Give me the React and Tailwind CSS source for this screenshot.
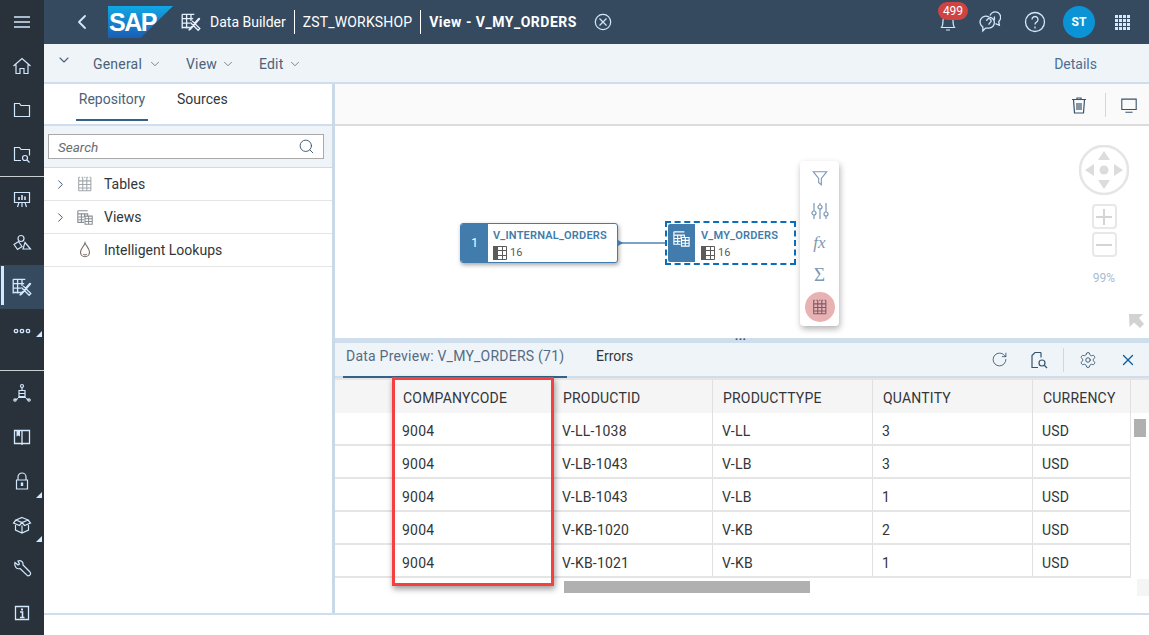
import React from "react";
import { ChevronDown, ChevronLeft, ChevronRight, Search, RotateCw, Settings, X } from "lucide-react";

const columns = ["COMPANYCODE", "PRODUCTID", "PRODUCTTYPE", "QUANTITY", "CURRENCY"];
const rows = [
  ["9004", "V-LL-1038", "V-LL", "3", "USD"],
  ["9004", "V-LB-1043", "V-LB", "3", "USD"],
  ["9004", "V-LB-1043", "V-LB", "1", "USD"],
  ["9004", "V-KB-1020", "V-KB", "2", "USD"],
  ["9004", "V-KB-1021", "V-KB", "1", "USD"],
];

/* ---- small drawn icons, all on a 20 box ---- */
function Ico({ size = 20, className = "", sw = 1.2, children }) {
  return (
    <svg width={size} height={size} viewBox="0 0 20 20" fill="none" stroke="currentColor" strokeWidth={sw} className={className}>
      {children}
    </svg>
  );
}

const TableGlyph = (props) => (
  <Ico {...props}>
    <path d="M3 2.500v15M7.500 2.500v15M12 2.500v15M16.500 2.500v15M3 6.500h13.500M3 10.500h13.500M3 14.500h13.500M3 17.500h13.500" />
    <path d="M3 2.500h13.500" strokeDasharray="1.500 1.500" />
  </Ico>
);
const ViewGlyph = (props) => (
  <Ico {...props}>
    <path d="M2 3h11M2 6.500h11v3M2 3v13h7M2 10h7M2 13h7M6 6.500V16M9.500 6.500V10" />
    <path d="M10 9h8v9h-8zM10 12h8M10 15h8M14 9v9" />
  </Ico>
);
const BuilderGlyph = (props) => (
  <Ico {...props}>
    <path d="M2 3h11M2 7h10M2 11h7M2 15h7M2 3v13M6 3v13M10 3v6" />
    <path d="M11 9l7 7-1.500 1.500-7-7M17.500 7.500l-8 9-1.500 1 1-1.700 8-9c.8-.4 1 .2.5.7z" />
  </Ico>
);
const MiniGrid = () => (
  <svg width="14" height="14" viewBox="0 0 14 14">
    <rect width="14" height="14" fill="#fff" />
    <rect width="5" height="14" fill="#5b5b5b" />
    <path d="M5 .5h8.500v13H5M.5 4.500h13M.5 9.500h13M9.500 0v14" stroke="#5b5b5b" fill="none" />
  </svg>
);

function NavItem({ children, active, corner, tall }) {
  return (
    <div className={`relative flex w-full items-center justify-center text-[#d1e8ff] ${tall ? "h-[61px] pb-[17px]" : "h-[44px]"} ${active ? "bg-[#354a5f]" : ""}`}>
      {active && <span className="absolute left-[1px] top-[1px] bottom-[4px] w-[3px] bg-[#d1e8ff]" />}
      {children}
      {corner && (
        <span className={`absolute right-[2px] h-0 w-0 border-b-[6px] border-l-[6px] border-b-[#d1e8ff] border-l-transparent ${tall ? "top-[22px]" : "bottom-[5px]"}`} />
      )}
    </div>
  );
}

function Sidebar() {
  return (
    <aside className="flex h-[635px] w-[44px] shrink-0 flex-col bg-[#29313a]">
      <NavItem>
        <svg width="16" height="14" viewBox="0 0 16 14" stroke="currentColor" strokeWidth="1.600"><path d="M0 2h16M0 7h16M0 12h16" /></svg>
      </NavItem>
      <NavItem>
        <Ico><path d="M1.500 10L10 2.500 18.500 10M4 8.500V17.500h4v-5h4v5h4V8.500" /></Ico>
      </NavItem>
      <NavItem>
        <Ico><path d="M2.500 16.500V3.500h5l1.500 2h8.500v11z" /></Ico>
      </NavItem>
      <NavItem>
        <Ico><path d="M9 16.500H2.500V3.500h5l1.500 2h8.500v6" /><circle cx="13" cy="14" r="2.500" /><path d="M15 16l2.500 2.500" /></Ico>
      </NavItem>
      <div className="h-[1px] w-full bg-[#c9ced3]" />
      <NavItem>
        <Ico><path d="M2.500 3.500h15v10h-15zM7 13.500L5.500 18M13 13.500l1.500 4.500M10 13.500V18" /><path d="M7 11V8M10 11V6M13 11V7.500" strokeWidth="1.600" /></Ico>
      </NavItem>
      <NavItem>
        <Ico><circle cx="9" cy="5.500" r="3" /><path d="M2 11.500l4.500-3 3.500 5-4.500 3zM13 9.500l5.500 6.500H11z" /></Ico>
      </NavItem>
      <NavItem active>
        <BuilderGlyph size={22} />
      </NavItem>
      <NavItem tall corner>
        <svg width="18" height="6" viewBox="0 0 18 6" fill="none" stroke="currentColor" strokeWidth="1.300"><circle cx="3" cy="3" r="1.700" /><circle cx="9" cy="3" r="1.700" /><circle cx="15" cy="3" r="1.700" /></svg>
      </NavItem>
      <div className="h-[1px] w-full bg-[#c9ced3]" />
      <NavItem>
        <Ico><circle cx="10" cy="3" r="1.500" /><path d="M10 4.500V7M6.500 7.500h7M7 7.500v6h6v-6M7 10.500h6M6 14.500h8M6 15.500l-3 1.500M14 15.500l3 1.500" /><circle cx="3" cy="17" r="1.200" /><circle cx="17" cy="17" r="1.200" /></Ico>
      </NavItem>
      <NavItem>
        <Ico sw={1.300}><path d="M2.500 3.500h15v13h-15zM10 3.500V18" /><path d="M4.500 3.500h3.500v6l-1.750-1-1.750 1z" fill="currentColor" stroke="none" /></Ico>
      </NavItem>
      <NavItem corner>
        <Ico><path d="M6 9V6a4 4 0 018 0v3M4.500 9h11v9h-11z" /><path d="M10 11.500v3.500" strokeWidth="2.400" /></Ico>
      </NavItem>
      <NavItem corner>
        <Ico><path d="M10 2.500l6 2.500-6 2.500L4 5zM4 5L1.500 8 7.500 10.500 10 7.500 12.500 10.500l6-2.500L16 5M3.500 10v5L10 18l6.500-3v-5M10 10.500V18" /></Ico>
      </NavItem>
      <NavItem>
        <Ico><path d="M3 3.500l3 2.500 1.500-1L6 2c3-1 5.500 1 5 4L18 13c.8 1 .5 2.500-.3 3.200s-2 .8-2.800 0L8 9.500C5 10.500 2 8 3 3.500z" /></Ico>
      </NavItem>
      <NavItem>
        <Ico sw={1.300}><path d="M3.500 3.500h13v13h-13z" /><path d="M10 5.500v2" strokeWidth="2" /><path d="M8 9h2.500v5M8 14.500h4.500" strokeWidth="1.600" /></Ico>
      </NavItem>
    </aside>
  );
}

function SapLogo() {
  return (
    <div className="flex h-[32px] w-[65px] items-center bg-gradient-to-b from-[#10a8e4] to-[#1a5db5] pl-[1px] [clip-path:polygon(0_0,100%_0,50%_100%,0_100%)]">
      <span className="font-['Liberation_Sans'] text-[25px] font-bold leading-none tracking-[-1.500px] text-white">SAP</span>
    </div>
  );
}

function Header() {
  return (
    <header className="flex h-[44px] shrink-0 items-center bg-[#354a5f] text-[14px] text-white">
      <ChevronLeft size={24} strokeWidth={1.800} className="ml-[26px] text-[#d1e8ff]" />
      <div className="ml-[14px]"><SapLogo /></div>
      <BuilderGlyph size={22} className="ml-[7px] text-[#e6f2ff]" />
      <span className="ml-[8px]">Data Builder</span>
      <span className="mx-[8px] h-[24px] w-[1px] bg-white" />
      <span className="tracking-[0.15px]">ZST_WORKSHOP</span>
      <span className="mx-[8px] h-[24px] w-[1px] bg-white" />
      <span className="font-bold tracking-[0.5px]">View - V_MY_ORDERS</span>
      <svg width="18" height="18" viewBox="0 0 18 18" fill="none" stroke="#d1e8ff" strokeWidth="1.200" className="ml-[17px]">
        <circle cx="9" cy="9" r="7.700" /><path d="M5.500 5.500l7 7M12.500 5.500l-7 7" />
      </svg>
      <div className="relative ml-auto flex h-[44px] w-[22px] items-center justify-center text-[#d1e8ff]">
        <Ico><path d="M3.500 15.500c1.500-2 1.500-3.500 1.500-7a5 5 0 0110 0c0 3.500 0 5 1.500 7zM8 18h4" /></Ico>
        <span className="absolute left-[1px] top-[2px] flex h-[18px] w-[30px] items-center justify-center rounded-[9px] bg-[#d04343] text-[12px] text-white">499</span>
      </div>
      <Ico size={22} className="ml-[20px] text-[#d1e8ff]"><path d="M9 5.500a5 5 0 110 10H6l-2.500 2.500V14.500A5 5 0 019 5.500z" /><path d="M10 4a5 5 0 118 5.500L18.500 13l-3.500-1.500" /><path d="M7 9a2 2 0 113 1.700c-.8.500-1 1-1 1.800M14 5v3.500" /></Ico>
      <svg width="22" height="22" viewBox="0 0 22 22" fill="none" stroke="#d1e8ff" strokeWidth="1.300" className="ml-[23px]">
        <circle cx="11" cy="11" r="9.500" /><path d="M8 8.500a3 3 0 114.500 2.600c-1 .6-1.500 1.200-1.500 2.400M11 15.500v2" />
      </svg>
      <div className="ml-[17px] flex h-[32px] w-[32px] items-center justify-center rounded-full bg-[#0a94d6] text-[12px] font-bold">ST</div>
      <div className="ml-[20px] mr-[19px] grid grid-cols-4 gap-[1px]">
        {Array.from({ length: 16 }).map((_, i) => (
          <span key={i} className="h-[3px] w-[3px] bg-[#d1e8ff]" />
        ))}
      </div>
    </header>
  );
}

function MenuBar() {
  const menu = (label) => (
    <div className="flex w-full items-center justify-between">
      <span className="tracking-[0.2px]">{label}</span>
      <ChevronDown size={14} strokeWidth={1.300} />
    </div>
  );
  return (
    <div className="flex h-[40px] shrink-0 items-center border-b-2 border-[#cfdeec] bg-[#eff4f9] pt-[2px] text-[14px] text-[#4b6278]">
      <ChevronDown size={16} strokeWidth={1.600} className="mb-[9px] ml-[12px]" />
      <div className="ml-[21px] w-[69px]">{menu("General")}</div>
      <div className="ml-[24px] w-[49px]">{menu("View")}</div>
      <div className="ml-[24px] w-[43px]">{menu("Edit")}</div>
      <span className="ml-auto mr-[52px] text-[#4f6d8e]">Details</span>
    </div>
  );
}

function TreeRow({ icon, label, expandable }) {
  return (
    <div className="flex h-[33px] items-center border-b border-[#e5e5e5] text-[14px] text-[#32363a]">
      <span className="flex w-[32px] justify-center">
        {expandable && <ChevronRight size={15} strokeWidth={1.500} className="ml-[1px] text-[#36536e]" />}
      </span>
      <span className="flex w-[28px] justify-start">{icon}</span>
      <span>{label}</span>
    </div>
  );
}

function LeftPanel() {
  return (
    <div className="flex w-[291px] shrink-0 flex-col border-r-[3px] border-[#c9d9e8] bg-white">
      <div className="flex h-[40px] text-[14px]">
        <div className="ml-[32px] flex h-[37px] w-[72px] items-center justify-center border-b-[2px] border-[#346187] pb-[4px] text-[#4b6278]">Repository</div>
        <div className="ml-[29px] flex h-[37px] items-center pb-[6px] text-[#32363a]">Sources</div>
      </div>
      <div className="h-[2px] bg-[#cfdeec]" />
      <div className="flex h-[42px] items-center border-b border-[#d9d9d9] bg-[#eff4f9] pl-[4px] pr-[8px]">
        <div className="flex h-[25px] w-full items-center justify-between border border-[#a9a9a9] bg-white pl-[9px] pr-[8px]">
          <span className="pt-[1px] text-[13.500px] italic text-[#6a6d70]">Search</span>
          <Search size={17} strokeWidth={1.300} className="text-[#36536e]" />
        </div>
      </div>
      <TreeRow expandable label="Tables" icon={<TableGlyph size={18} className="text-[#a3a8ad]" />} />
      <TreeRow expandable label="Views" icon={<ViewGlyph size={18} className="text-[#8a8f94]" />} />
      <TreeRow
        label="Intelligent Lookups"
        icon={
          <Ico size={18} className="text-[#7a6a5f]"><path d="M10 2c1 3.500 5 6 5 10.500a5 5 0 01-10 0C5 8.500 9 6 10 2z" /><path d="M8 14.500a2.500 2.500 0 004 0" /></Ico>
        }
      />
    </div>
  );
}

function DiagramCanvas() {
  return (
    <div className="relative h-[212px] shrink-0 bg-white">
      {/* first node */}
      <div className="absolute left-[125px] top-[97px] flex h-[40px] w-[158px] overflow-hidden rounded-[3px] border border-[#427cac] bg-white shadow-[1px_2px_4px_rgba(0,0,0,0.35)]">
        <div className="flex w-[27px] items-center justify-center bg-[#427cac] text-[12px] text-white">1</div>
        <div className="flex flex-col pl-[5px] pt-[4px] text-[#427cac]">
          <span className="text-[11px] font-semibold leading-[15px] tracking-[0.2px]">V_INTERNAL_ORDERS</span>
          <span className="mt-[2px] flex items-center gap-[3px] text-[11px] leading-[16px] text-[#5b5b5b]"><MiniGrid />16</span>
        </div>
      </div>
      {/* link between them */}
      <div className="absolute left-[283px] top-[116px] h-[2px] w-[48px] bg-[#7ba3c7]" />
      <div className="absolute left-[283px] top-[114px] h-0 w-0 border-y-[3px] border-l-[5px] border-y-transparent border-l-[#427cac]" />
      {/* selected node */}
      <div className="absolute left-[330px] top-[95px] h-[44px] w-[131px] border-2 border-dashed border-[#0a6ebd] p-[1px]">
        <div className="flex h-full overflow-hidden rounded-[2px] bg-white">
          <div className="flex w-[27px] items-start justify-center bg-[#427cac] pt-[5px] text-white">
            <ViewGlyph size={19} />
          </div>
          <div className="flex flex-col pl-[6px] pt-[4px] text-[#427cac]">
            <span className="text-[11px] font-semibold leading-[15px] tracking-[0.2px]">V_MY_ORDERS</span>
            <span className="mt-[2px] flex items-center gap-[3px] text-[11px] leading-[16px] text-[#5b5b5b]"><MiniGrid />16</span>
          </div>
        </div>
      </div>
      {/* node toolbar */}
      <div className="absolute left-[465px] top-[35px] flex h-[165px] w-[39px] flex-col items-center rounded-[4px] bg-white pt-[8px] text-[#7b98b5] shadow-[1px_3px_6px_rgba(0,0,0,0.3)]">
        <Ico size={18}><path d="M2.500 3h15l-6 7.500v7l-3-2.500v-4.500z" /></Ico>
        <Ico size={20} className="mt-[14px]"><path d="M4 2v8M4 14v4M10 2v2M10 8v10M16 2v9M16 15v3" /><circle cx="4" cy="12" r="2" /><circle cx="10" cy="6" r="2" /><circle cx="16" cy="13" r="2" /></Ico>
        <span className="mt-[12px] font-['Liberation_Serif'] text-[17px] italic leading-[20px]">fx</span>
        <span className="mt-[12px] font-['Liberation_Serif'] text-[19px] leading-[20px]">Σ</span>
        <div className="mt-[7px] flex h-[30px] w-[30px] items-center justify-center rounded-full bg-[#e8b2b2] text-[#7d5a6b]">
          <TableGlyph size={18} />
        </div>
      </div>
      {/* navigation control */}
      <div className="absolute left-[744px] top-[19px] flex w-[50px] flex-col items-center">
        <svg width="50" height="50" viewBox="0 0 50 50">
          <circle cx="25" cy="25" r="24" fill="none" stroke="#e5e5e5" strokeWidth="2.500" />
          <path d="M25 6l6 9H19zM25 44l-6-9h12zM6 25l9-6v12zM44 25l-9 6V19z" fill="#dcdcdc" />
          <circle cx="25" cy="25" r="4.500" fill="#dcdcdc" />
        </svg>
        <div className="mt-[9px] flex h-[25px] w-[25px] items-center justify-center rounded-[4px] border-2 border-[#e8e8e8] text-[#d4d4d4]">
          <svg width="16" height="16" viewBox="0 0 16 16" stroke="currentColor" strokeWidth="2"><path d="M0 8h16M8 0v16" /></svg>
        </div>
        <div className="mt-[3px] flex h-[25px] w-[25px] items-center justify-center rounded-[4px] border-2 border-[#e8e8e8] text-[#d4d4d4]">
          <svg width="16" height="16" viewBox="0 0 16 16" stroke="currentColor" strokeWidth="2"><path d="M0 8h16" /></svg>
        </div>
        <span className="mt-[12px] text-[12px] text-[#a8bdd1]">99%</span>
      </div>
      <svg width="16" height="16" viewBox="0 0 16 16" className="absolute left-[793px] top-[187px]" fill="#d2d2d2">
        <path d="M1 1h14l-4 4 5 6-4 4-6-5.500-4.500 4.500z" />
      </svg>
    </div>
  );
}

function DataTable() {
  return (
    <div className="flex">
      <div className="w-[796px] border-t-2 border-[#e5e5e5]">
        <div className="grid h-[33px] grid-cols-[58px_160px_160px_160px_160px_98px] bg-[#f5f5f5] text-[#32363a]">
          <div />
          {columns.map((c) => (
            <div key={c} className="flex items-center border-r-[1px] border-[#e0e0e0] pl-[10px] pt-[4px] tracking-[0.2px]">{c}</div>
          ))}
        </div>
        {rows.map((r, i) => (
          <div key={i} className="grid h-[33px] grid-cols-[58px_160px_160px_160px_160px_98px] border-b-2 border-[#e5e5e5] text-[#32363a]">
            <div />
            {r.map((cell, j) => (
              <div key={j} className="flex items-center border-r-[1px] border-[#e0e0e0] pl-[9px] pt-[5px] tracking-[0.2px]">{cell}</div>
            ))}
          </div>
        ))}
      </div>
      <div className="flex-1 border-t-2 border-[#e5e5e5]">
        <div className="h-[33px] bg-[#f5f5f5]" />
        <div className="ml-[3px] mt-[6px] h-[18px] w-[12px] bg-[#b0b0b0]" />
      </div>
    </div>
  );
}

function PreviewPane() {
  return (
    <div className="relative flex-1 bg-white text-[14px]">
      <div className="flex h-[35px] items-center border-b-2 border-[#cfdeec] bg-[#eff4f9]">
        <div className="relative ml-[8px] flex h-[33px] w-[224px] items-center pb-[6px] pl-[3px] tracking-[0.23px] text-[#556b82]">
          Data Preview: V_MY_ORDERS (71)
          <span className="absolute bottom-[-2px] left-0 h-[2px] w-full bg-[#346187]" />
        </div>
        <span className="ml-[29px] pb-[6px] text-[#32363a]">Errors</span>
        <div className="ml-auto flex items-center text-[#36536e]">
          <RotateCw size={17} strokeWidth={1.200} />
          <Ico size={20} className="ml-[21px]"><path d="M12 2.500H6L3 5.500v12h6M12 2.500v5" /><circle cx="13" cy="13" r="3" /><path d="M15.500 15.500l2.500 2.500" /></Ico>
          <span className="ml-[14px] h-[24px] w-[1px] bg-[#d0d7de]" />
          <Settings size={18} strokeWidth={1.200} className="ml-[15px]" />
          <X size={18} strokeWidth={1.800} className="ml-[22px] mr-[12px] text-[#0a5e9e]" />
        </div>
      </div>
      <DataTable />
      {/* horizontal scrollbar */}
      <div className="flex h-[18px] items-center justify-between">
        <div className="ml-[229px] h-[12px] w-[246px] bg-[#b0b0b0]" />
        <div className="h-[17px] w-[12px] bg-[#f5f5f5]" />
      </div>
      {/* highlight drawn over the screenshot */}
      <div className="absolute left-[57px] top-[34px] h-[209px] w-[162px] border-[3px] border-[#f44040] shadow-[1px_3px_6px_rgba(0,0,0,0.4)]" />
    </div>
  );
}

export default function App() {
  return (
    <div className="flex h-[635px] w-[1149px] overflow-hidden bg-white font-['Roboto',sans-serif]">
      <Sidebar />
      <div className="flex min-w-0 flex-1 flex-col">
        <Header />
        <MenuBar />
        <div className="flex h-[531px] border-b-2 border-[#cfdeec]">
          <LeftPanel />
          <div className="flex min-w-0 flex-1 flex-col">
            <div className="flex h-[42px] shrink-0 items-center justify-end border-b-2 border-[#dcdcdc] bg-[#fafafa] pt-[1px] text-[#36536e]">
              <Ico size={20} className="mr-[2px]"><path d="M3 4.500h14M8 4.500V3h4v1.500M4.500 4.500l1 13.500h9l1-13.500M8 8v7M10 8v7M12 8v7" /></Ico>
              <span className="ml-[14px] h-[24px] w-[1px] bg-[#d0d7de]" />
              <Ico size={18} className="ml-[14px] mr-[11px]"><path d="M2 3.500h16v11.500H2zM6 18h8" /></Ico>
            </div>
            <DiagramCanvas />
            <div className="relative h-[5px] shrink-0 bg-[#cfdeec]">
              <span className="absolute left-[400px] top-[0px] text-[8px] font-bold leading-[4px] tracking-[1px] text-[#36536e]">•••</span>
            </div>
            <PreviewPane />
          </div>
        </div>
      </div>
    </div>
  );
}
